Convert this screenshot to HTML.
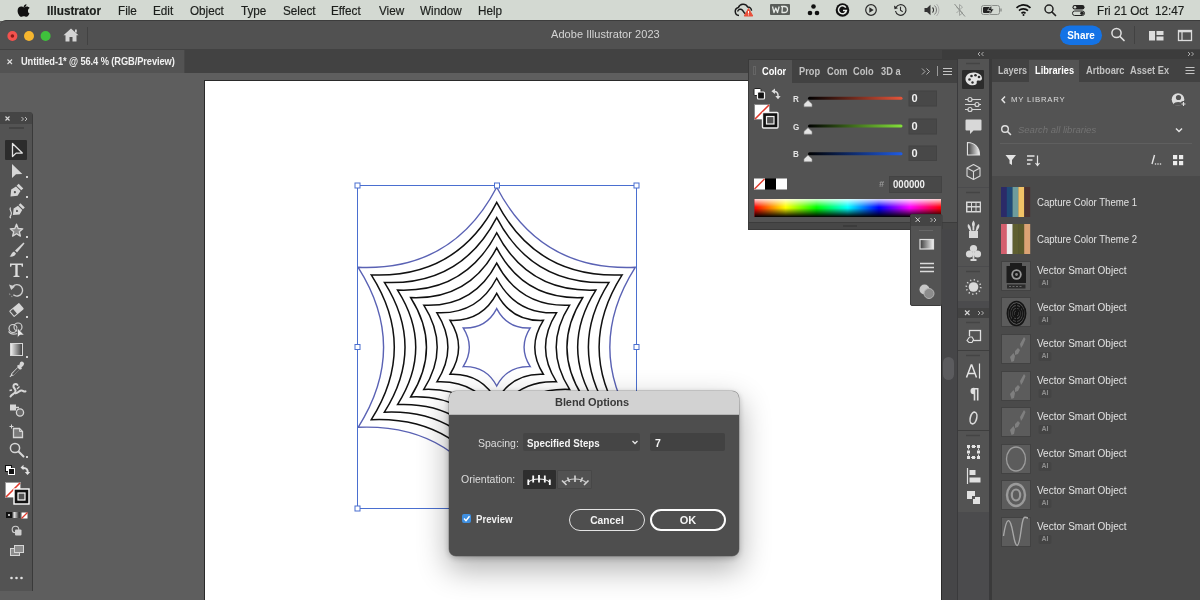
<!DOCTYPE html>
<html><head><meta charset="utf-8">
<style>
*{box-sizing:border-box;margin:0;padding:0}
html,body{width:1200px;height:600px;overflow:hidden;background:#5e5e5e;font-family:"Liberation Sans",sans-serif;}
.a{position:absolute}
#menubar{left:0;top:0;width:1200px;height:21px;background:#d3d9d2}
#menubar span{position:absolute;top:3px;font-size:13px;color:#1c1f1c;white-space:nowrap;transform-origin:0 0;transform:scaleX(.9);will-change:opacity;-webkit-text-stroke:.2px #1c1f1c}
#appbar{left:0;top:20px;width:1200px;height:30px;background:#515151;border-top-left-radius:6px;border-top:1px solid #3c3c3c}
#tabbar{left:0;top:49px;width:1200px;height:25px;background:#424242}
#doctab{left:0;top:50px;width:185px;height:24px;background:#535353;border-right:1px solid #484848}
#canvas{left:0;top:73px;width:957px;height:527px;background:#5e5e5e}
#artboard{left:204px;top:80px;width:738px;height:520px;background:#fff;border:1px solid #2a2a2a;border-bottom:none}
.t{position:absolute;white-space:nowrap;will-change:opacity}
</style></head><body>
<!-- MENUBAR -->
<div id="menubar" class="a">
<span style="left:47px;font-weight:bold">Illustrator</span>
<span style="left:118px">File</span>
<span style="left:153px">Edit</span>
<span style="left:190px">Object</span>
<span style="left:241px">Type</span>
<span style="left:283px">Select</span>
<span style="left:331px">Effect</span>
<span style="left:379px">View</span>
<span style="left:420px">Window</span>
<span style="left:478px">Help</span>
<span style="left:1097px">Fri 21 Oct</span><span style="left:1155px">12:47</span>
</div>
<!-- APPBAR -->
<div id="appbar" class="a"></div>
<div id="tabbar" class="a"></div>
<div id="doctab" class="a"></div>
<div id="canvas" class="a"></div>
<div id="artboard" class="a"></div>
<!--TOP-->
<svg class="a" style="left:0;top:0" width="1200" height="50" viewBox="0 0 1200 50" fill="none">
 <!-- apple -->
 <path d="M26.500 4.200c.1 1.600-1.300 3-2.800 2.900-.2-1.500 1.300-3 2.800-2.900zM29.300 13.700c-.5 1.200-1.600 3.100-2.900 3.100-1 0-1.400-.6-2.600-.6s-1.600.6-2.600.6c-1.500 0-3.600-3.300-3.600-6.100 0-2.700 1.800-4.100 3.500-4.100 1.100 0 2 .7 2.700.7.600 0 1.700-.8 3-.8 1 0 2.100.5 2.900 1.500-2.500 1.400-2.100 4.800.1 5.700z" fill="#111"/>
 <!-- creative cloud -->
 <path d="M739 15.500a4 4 0 0 1-.6-7.900 5 5 0 0 1 9.200-.7 3.900 3.900 0 0 1 3.900 3.900" stroke="#1a1a1a" stroke-width="1.500"/>
 <path d="M737.500 11.500c1-2.500 3.500-3 5-1.200l1.800 2.400c1.300 1.600 3.400 1 4-1" stroke="#1a1a1a" stroke-width="1.400"/>
 <path d="M748.500 8.500l4.300 7.500h-8.600z" fill="#e8503a" stroke="#e8503a" stroke-width="1" stroke-linejoin="round"/>
 <path d="M748.500 11v2.500M748.500 14.500v.8" stroke="#fff" stroke-width="1"/>
 <!-- WD -->
 <rect x="770" y="4" width="20" height="11" rx="1" fill="#5a5e5a"/>
 <path d="M772.500 6.500l1.500 6 1.800-4.500 1.700 4.500 1.700-6M781.500 6.500h3c2 0 3 1.200 3 3s-1.300 3-3.300 3h-2.200l.4-6z" stroke="#e4e8e4" stroke-width="1.300" stroke-linejoin="round"/>
 <!-- three dots -->
 <circle cx="813.500" cy="6.500" r="2.300" fill="#111"/><circle cx="810" cy="13" r="2.300" fill="#111"/><circle cx="817" cy="13" r="2.300" fill="#111"/>
 <!-- G -->
 <circle cx="842.500" cy="10" r="6.800" fill="#111"/>
 <path d="M845.800 7.600a4 4 0 1 0 .6 2.900h-3.400" stroke="#e8ece8" stroke-width="1.500"/>
 <!-- play -->
 <circle cx="871" cy="10" r="5.300" stroke="#2a2a2a" stroke-width="1.200"/><path d="M869.300 7.300l4.400 2.700-4.400 2.700z" fill="#2a2a2a"/>
 <!-- time machine -->
 <path d="M896 7.500a5.300 5.300 0 1 1-.5 3.500" stroke="#2a2a2a" stroke-width="1.200"/>
 <path d="M894 5.500l.5 3.800 3.500-1z" fill="#2a2a2a"/><path d="M900.500 6.800v3.500l2.200 1.500" stroke="#2a2a2a" stroke-width="1.100"/>
 <!-- volume -->
 <path d="M924.500 8h2.500l3.500-3.200v10.400l-3.500-3.200h-2.500z" fill="#333"/>
 <path d="M932.500 7.500a3.500 3.500 0 0 1 0 5" stroke="#333" stroke-width="1.100"/><path d="M934.500 5.500a6 6 0 0 1 0 9" stroke="#777" stroke-width="1"/><path d="M936.500 4a8.500 8.500 0 0 1 0 12" stroke="#aaa" stroke-width=".9"/>
 <!-- bluetooth off -->
 <path d="M956.500 7l6 6-3 2.500v-11l3 2.500-6 6" stroke="#a2a6a2" stroke-width="1"/><path d="M954.500 4l10.500 12.500" stroke="#8a8e8a" stroke-width="1"/>
 <!-- battery -->
 <rect x="981.500" y="5.500" width="18" height="9" rx="2" stroke="#8a8e8a" stroke-width="1"/><path d="M1001 8.500v3" stroke="#8a8e8a" stroke-width="1.400"/>
 <rect x="983" y="7" width="9" height="6" rx="1" fill="#222"/>
 <path d="M992 4.500l-4.500 6h3l-1.500 5 5-6.500h-3z" fill="#111" stroke="#d3d9d2" stroke-width=".7"/>
 <!-- wifi -->
 <path d="M1016.500 7.800a10 10 0 0 1 14 0" stroke="#111" stroke-width="1.700"/><path d="M1019 10.600a6.500 6.500 0 0 1 9 0" stroke="#111" stroke-width="1.700"/><path d="M1021.500 13.300a3 3 0 0 1 4 0" stroke="#111" stroke-width="1.700"/><circle cx="1023.500" cy="15" r="1" fill="#111"/>
 <!-- search -->
 <circle cx="1049" cy="9" r="4" stroke="#222" stroke-width="1.500"/><path d="M1052 12l3.500 3.500" stroke="#222" stroke-width="1.700" stroke-linecap="round"/>
 <!-- control center -->
 <rect x="1072.500" y="5" width="12" height="4.500" rx="2.200" fill="#222"/><circle cx="1075" cy="7.200" r="1.300" fill="#d3d9d2"/>
 <rect x="1072.500" y="11" width="12" height="4.500" rx="2.200" stroke="#222" stroke-width="1"/><circle cx="1082" cy="13.200" r="1.800" fill="#222"/>
 <!-- traffic lights -->
 <circle cx="12.400" cy="36" r="5" fill="#f4524e"/><circle cx="12.400" cy="36" r="1.800" fill="#8c1a16"/>
 <circle cx="29" cy="36" r="5" fill="#f6b62f"/>
 <circle cx="45.600" cy="36" r="5" fill="#3fc13c"/>
 <!-- home -->
 <path d="M71 28.500l7.500 6.800h-2v6.200h-4v-4.500h-3v4.500h-4v-6.200h-2z" fill="#d4d4d4"/><rect x="75" y="29.500" width="1.800" height="3" fill="#d4d4d4"/>
 <path d="M87.500 27v18" stroke="#424242" stroke-width="1"/>
 <!-- share -->
 <rect x="1060" y="25.500" width="42" height="19.500" rx="9.700" fill="#1473e6"/>
 <!-- search -->
 <circle cx="1116.500" cy="33" r="4.600" stroke="#e0e0e0" stroke-width="1.500"/><path d="M1120 36.500l4 4" stroke="#e0e0e0" stroke-width="1.700" stroke-linecap="round"/>
 <path d="M1134.500 26v18" stroke="#424242" stroke-width="1"/>
 <!-- layout -->
 <rect x="1149" y="31" width="6" height="9.500" fill="#dcdcdc"/><rect x="1156.500" y="31" width="7" height="4" fill="#dcdcdc"/><rect x="1156.500" y="36.500" width="7" height="4" fill="#dcdcdc"/>
 <!-- panel -->
 <rect x="1178.500" y="30.500" width="13" height="10" stroke="#dcdcdc" stroke-width="1.300"/><path d="M1182 31v9" stroke="#dcdcdc" stroke-width="1.200"/><path d="M1179 31.500h12" stroke="#dcdcdc" stroke-width="1.600"/>
 <!-- tab close x -->
</svg>
<div class="t" style="left:551px;top:28px;font-size:11px;color:#d4d4d4;letter-spacing:.05px">Adobe Illustrator 2023</div>
<div class="t" style="left:1060px;width:42px;top:29px;text-align:center;font-size:11px;font-weight:bold;color:#fff;transform:scaleX(.9)">Share</div>
<svg class="a" style="left:0;top:50px" width="200" height="24" viewBox="0 50 200 24" fill="none"><path d="M7.500 59.500l4.500 4.500M12 59.500l-4.500 4.500" stroke="#e0e0e0" stroke-width="1.100"/></svg>
<div class="t" style="left:21px;top:55px;font-size:10.500px;font-weight:bold;color:#f0f0f0;transform:scaleX(.885);transform-origin:0 0;letter-spacing:-.1px">Untitled-1* @ 56.4 % (RGB/Preview)</div>

<!--/TOP-->
<!--ART-->
<svg class="a" style="left:0;top:0" width="1200" height="600" viewBox="0 0 1200 600">
<g fill="none" stroke="#111" stroke-width="1.5" stroke-linejoin="miter">
<path d="M496.70 293.44Q511.46 321.74 543.35 320.37Q526.22 347.30 543.35 374.23Q511.46 372.86 496.70 401.16Q481.94 372.86 450.05 374.23Q467.18 347.30 450.05 320.37Q481.94 321.74 496.70 293.44Z"/>
<path d="M496.70 278.27Q515.61 314.54 556.48 312.79Q534.52 347.30 556.48 381.81Q515.61 380.06 496.70 416.33Q477.79 380.06 436.92 381.81Q458.88 347.30 436.92 312.79Q477.79 314.54 496.70 278.27Z"/>
<path d="M496.70 263.11Q519.77 307.35 569.61 305.21Q542.83 347.30 569.61 389.39Q519.77 387.25 496.70 431.49Q473.63 387.25 423.79 389.39Q450.57 347.30 423.79 305.21Q473.63 307.35 496.70 263.11Z"/>
<path d="M496.70 247.95Q523.92 300.15 582.74 297.62Q551.14 347.30 582.74 396.98Q523.92 394.45 496.70 446.65Q469.48 394.45 410.66 396.98Q442.26 347.30 410.66 297.62Q469.48 300.15 496.70 247.95Z"/>
<path d="M496.70 232.79Q528.07 292.96 595.87 290.04Q559.45 347.30 595.87 404.56Q528.07 401.64 496.70 461.81Q465.33 401.64 397.53 404.56Q433.95 347.30 397.53 290.04Q465.33 292.96 496.70 232.79Z"/>
<path d="M496.70 217.62Q532.23 285.76 609.00 282.46Q567.76 347.30 609.00 412.14Q532.23 408.84 496.70 476.98Q461.17 408.84 384.40 412.14Q425.64 347.30 384.40 282.46Q461.17 285.76 496.70 217.62Z"/>
<path d="M496.70 202.46Q536.38 278.57 622.13 274.88Q576.07 347.30 622.13 419.72Q536.38 416.03 496.70 492.14Q457.02 416.03 371.27 419.72Q417.33 347.30 371.27 274.88Q457.02 278.57 496.70 202.46Z"/>
</g>
<g fill="none" stroke="#5a62b4" stroke-width="1.4">
<path d="M496.70 308.60Q507.30 328.93 530.22 327.95Q517.91 347.30 530.22 366.65Q507.30 365.67 496.70 386.00Q486.10 365.67 463.18 366.65Q475.49 347.30 463.18 327.95Q486.10 328.93 496.70 308.60Z"/>
<path d="M496.70 187.30Q540.54 271.37 635.26 267.30Q584.38 347.30 635.26 427.30Q540.54 423.23 496.70 507.30Q452.86 423.23 358.14 427.30Q409.02 347.30 358.14 267.30Q452.86 271.37 496.70 187.30Z"/>
</g>
<rect x="357.5" y="185.5" width="279.0" height="323.0" fill="none" stroke="#4a6fd0" stroke-width="1"/>
<rect x="355.0" y="183.0" width="5" height="5" fill="#fff" stroke="#4a6fd0" stroke-width="1"/>
<rect x="494.5" y="183.0" width="5" height="5" fill="#fff" stroke="#4a6fd0" stroke-width="1"/>
<rect x="634.0" y="183.0" width="5" height="5" fill="#fff" stroke="#4a6fd0" stroke-width="1"/>
<rect x="355.0" y="344.5" width="5" height="5" fill="#fff" stroke="#4a6fd0" stroke-width="1"/>
<rect x="634.0" y="344.5" width="5" height="5" fill="#fff" stroke="#4a6fd0" stroke-width="1"/>
<rect x="355.0" y="506.0" width="5" height="5" fill="#fff" stroke="#4a6fd0" stroke-width="1"/>
<rect x="494.5" y="506.0" width="5" height="5" fill="#fff" stroke="#4a6fd0" stroke-width="1"/>
<rect x="634.0" y="506.0" width="5" height="5" fill="#fff" stroke="#4a6fd0" stroke-width="1"/>
</svg>
<!--/ART-->
<!--TOOLS-->
<div class="a" style="left:0;top:112px;width:33px;height:479px;background:#535353;border-right:1px solid #3a3a3a;border-top-right-radius:4px;overflow:hidden">
 <div class="a" style="left:0;top:0;width:33px;height:12px;background:#454545"></div>
 <div class="a" style="left:9px;top:15px;width:15px;height:2px;background:#444"></div>
 <div class="a" style="left:5px;top:28px;width:22px;height:20px;background:#2c2c2c;border-radius:1px"></div>
</div>
<svg class="a" style="left:0;top:100px" width="40" height="500" viewBox="0 100 40 500" fill="none" stroke="none">
 <!-- header x and >> -->
 <path d="M5.5 116.5l4 4M9.5 116.5l-4 4" stroke="#d8d8d8" stroke-width="1.1"/>
 <path d="M21.5 117l2 2-2 2M25 117l2 2-2 2" stroke="#c8c8c8" stroke-width="0.9"/>
 <!-- small corner dots -->
 <g fill="#d0d0d0">
  <rect x="26" y="176" width="2" height="2"/><rect x="26" y="196" width="2" height="2"/><rect x="26" y="236" width="2" height="2"/>
  <rect x="26" y="256" width="2" height="2"/><rect x="26" y="276" width="2" height="2"/><rect x="26" y="296" width="2" height="2"/>
  <rect x="26" y="316" width="2" height="2"/><rect x="26" y="356" width="2" height="2"/><rect x="26" y="456" width="2" height="2"/>
 </g>
 <!-- selection tool (outlined arrow) -->
 <path d="M12.5 143.5v13l3.6-3.4 1 .1 5.2-.2z" stroke="#e4e4e4" stroke-width="1.3" stroke-linejoin="round" transform="translate(0,0)"/>
 <!-- direct selection (solid) -->
 <path d="M12 164v14l4-3.8 6.300-.2z" fill="#d6d6d6"/>
 <!-- pen -->
 <g transform="translate(16.500,190.500) rotate(45)" fill="#d6d6d6">
  <path d="M-3.200-2.500h6.400l1.300 5.500-4.500 5.500-4.500-5.500zM0 1.200a1.100 1.100 0 1 0 .01 0z" fill-rule="evenodd"/>
  <rect x="-3.300" y="-6.300" width="6.600" height="2.800"/>
 </g>
 <!-- curvature pen -->
 <g transform="translate(18.500,209.500) rotate(45)" fill="#d6d6d6">
  <path d="M-3-2.300h6l1.200 5-4.200 5.200-4.200-5.200zM0 1.100a1 1 0 1 0 .01 0z" fill-rule="evenodd"/>
  <rect x="-3.100" y="-5.800" width="6.200" height="2.500"/>
 </g>
 <path d="M10.500 207.500c-2 3 2.500 4 .5 7.500-.8 1.600-1.800 2.500 0 2.800" stroke="#d6d6d6" stroke-width="1.200"/>
 <!-- star -->
 <path d="M16.5 224.2L18.2 228.5L22.8 228.8L19.3 231.7L20.4 236.1L16.5 233.7L12.6 236.1L13.7 231.7L10.2 228.8L14.8 228.5z" stroke="#d6d6d6" stroke-width="1.300" stroke-linejoin="round" fill="#8a8a8a"/>
 <!-- brush -->
 <path d="M23.500 242.500l1 1-7.500 9-2-2z" fill="#d6d6d6"/>
 <path d="M14 251.500l2 2c-1 2.500-3.500 3.500-6.500 3 1.800-.8 1.500-3.500 4.500-5z" fill="#d6d6d6"/>
 <!-- T -->
 <path d="M10 263.500h13v3.300h-1.200l-.5-1.800h-3.600v10.500l1.800.4v1.100h-6v-1.100l1.800-.4v-10.500h-3.600l-.5 1.800h-1.200z" fill="#dcdcdc"/>
 <!-- rotate -->
 <path d="M11.500 288.500a5.700 5.700 0 1 1 1.800 6.300" stroke="#cfcfcf" stroke-width="1.400"/>
 <path d="M9 284.500l2.200 5.500 3.800-3.400z" fill="#cfcfcf"/>
 <path d="M12.500 296.800a6 6 0 0 1-3.300-4" stroke="#8c8c8c" stroke-width="1.200" stroke-dasharray="1.500 1.500"/>
 <!-- eraser -->
 <g transform="translate(16.500,310) rotate(-40)">
  <rect x="-6.500" y="-4" width="13" height="8" rx="1" fill="#d6d6d6"/>
  <rect x="-5.500" y="-3" width="3.500" height="6" fill="#535353"/>
 </g>
 <!-- shape builder -->
 <circle cx="13" cy="328.500" r="4" stroke="#d0d0d0" stroke-width="1.200"/>
 <circle cx="18" cy="327" r="4" stroke="#d0d0d0" stroke-width="1.200"/>
 <path d="M8.500 331.500c2 3 6 3 9 2" stroke="#d0d0d0" stroke-width="1.200"/>
 <path d="M17.500 328v9.500l2.500-2.400 4.200-.1z" fill="#e8e8e8" stroke="#535353" stroke-width=".6"/>
 <!-- gradient -->
 <defs><linearGradient id="gt" x1="0" x2="1"><stop offset="0" stop-color="#f2f2f2"/><stop offset="1" stop-color="#3a3a3a"/></linearGradient></defs>
 <rect x="10.500" y="343.500" width="12" height="12" fill="url(#gt)" stroke="#d6d6d6" stroke-width="1"/>
 <!-- eyedropper -->
 <path d="M20.200 362.300a2.200 2.200 0 0 1 3.200 3.200l-2.200 2.200.8.800-1.300 1.300-.8-.8-6.400 6.400-2.300.8-.9 1.100-.8-.8 1.100-.9.800-2.300 6.400-6.400-.8-.8 1.300-1.300.8.800z" fill="#d6d6d6"/>
 <path d="M17.800 367.800l1.600 1.600-5.300 5.300-1.900.5.500-1.900z" fill="#535353"/>
 <!-- symbol sprayer-ish -->
 <path d="M10.500 396.500c1.500-2.500 4-2.500 5-5s-3-3.500-2-6c.8-1.800 3-1.800 4-.5" stroke="#d6d6d6" stroke-width="2" stroke-linecap="round"/>
 <path d="M15 393c2 1.500 3.500-2 6-2.500s2.500 2 4.500.8" stroke="#d6d6d6" stroke-width="2" stroke-linecap="round"/>
 <path d="M9.500 390.500l2.500-.5M17 389l2.500-2.500" stroke="#d6d6d6" stroke-width="1.300"/>
 <!-- blend / live paint-ish -->
 <rect x="10" y="404.500" width="6" height="6" fill="#d6d6d6"/>
 <path d="M13 407.500h6" stroke="#d6d6d6" stroke-width="1.500"/>
 <circle cx="20" cy="412.500" r="3.600" stroke="#d6d6d6" stroke-width="1.300" fill="#6a6a6a"/>
 <!-- artboard -->
 <path d="M9.500 426.500h4M11.500 424.500v4" stroke="#d6d6d6" stroke-width="1"/>
 <path d="M13.500 428.500h6l3 3v6h-9z" stroke="#d6d6d6" stroke-width="1.300" fill="#7a7a7a"/>
 <path d="M19.500 428.500v3h3" stroke="#d6d6d6" stroke-width="1"/>
 <!-- zoom -->
 <circle cx="15" cy="448" r="4.600" stroke="#d6d6d6" stroke-width="1.500"/>
 <path d="M18.500 451.500l5 5" stroke="#d6d6d6" stroke-width="2" stroke-linecap="round"/>
 <!-- default fill/stroke + swap -->
 <rect x="5.500" y="465.500" width="6" height="6" fill="#fff" stroke="#111" stroke-width="1"/>
 <rect x="8.500" y="468.500" width="6" height="6" fill="#111" stroke="#fff" stroke-width="1"/>
 <path d="M23 468c3.500-.3 5 1.700 4.700 5" stroke="#e0e0e0" stroke-width="2"/>
 <path d="M23.500 464.800v5.400l-3-2.700zM24.800 472h5.400l-2.700 3z" fill="#e0e0e0"/>
 <!-- fill (none) -->
 <rect x="5.500" y="482.500" width="15" height="15" fill="#fff" stroke="#9a9a9a" stroke-width="1"/>
 <path d="M6 497l14-14" stroke="#e0392b" stroke-width="1.600"/>
 <!-- stroke (black) -->
 <rect x="14" y="489" width="15" height="15" fill="#111" stroke="#fff" stroke-width="1.400"/>
 <rect x="18" y="493" width="7" height="7" fill="#535353" stroke="#fff" stroke-width="1.200"/>
 <!-- color modes -->
 <rect x="6" y="512" width="6" height="6" fill="#111"/><rect x="8" y="514" width="2" height="2" fill="#bbb"/>
 <defs><linearGradient id="gm" x1="0" x2="1"><stop offset="0" stop-color="#fff"/><stop offset="1" stop-color="#222"/></linearGradient></defs>
 <rect x="13.500" y="512" width="6" height="6" fill="url(#gm)"/>
 <rect x="21.500" y="512.500" width="6" height="6" fill="#fff"/><path d="M21.500 518.500l6-6" stroke="#e0392b" stroke-width="1.300"/>
 <!-- draw mode -->
 <circle cx="15.500" cy="529.500" r="3.300" stroke="#cfcfcf" stroke-width="1.100"/>
 <rect x="15" y="529.500" width="6.500" height="6" rx="1" fill="#cfcfcf"/>
 <!-- screen mode -->
 <rect x="10.500" y="548.500" width="9" height="7" fill="#8c8c8c" stroke="#d6d6d6" stroke-width="1"/>
 <rect x="14.500" y="545.500" width="9" height="7" fill="#8c8c8c" stroke="#d6d6d6" stroke-width="1"/>
 <!-- dots -->
 <circle cx="11.500" cy="578" r="1.300" fill="#e0e0e0"/><circle cx="16.500" cy="578" r="1.300" fill="#e0e0e0"/><circle cx="21.500" cy="578" r="1.300" fill="#e0e0e0"/>
</svg>

<!--/TOOLS-->
<!--COLORPANEL-->
<div class="a" style="left:749px;top:60px;width:208px;height:169px;background:#535353;box-shadow:0 0 0 1px #3a3a3a"></div>
<div class="a" style="left:749px;top:60px;width:208px;height:23px;background:#424242"></div>
<div class="a" style="left:749px;top:60px;width:43px;height:24px;background:#535353"></div>
<div class="a" style="left:749px;top:222px;width:208px;height:7px;background:#474747;border-top:1px solid #3c3c3c"></div>
<div class="a" style="left:843px;top:225px;width:14px;height:2px;background:#3c3c3c"></div>
<div class="a" style="left:753px;top:66px;width:3px;height:9px;border:1px solid #6a6a6a;opacity:.8"></div>
<div class="t" style="left:762px;top:65px;font-size:11px;font-weight:bold;color:#fff;letter-spacing:0;transform:scaleX(.84);transform-origin:0 0">Color</div>
<div class="t" style="left:799px;top:65px;font-size:11px;font-weight:bold;color:#c2c2c2;letter-spacing:0;transform:scaleX(.84);transform-origin:0 0">Prop</div>
<div class="t" style="left:827px;top:65px;font-size:11px;font-weight:bold;color:#c2c2c2;letter-spacing:0;transform:scaleX(.84);transform-origin:0 0">Com</div>
<div class="t" style="left:853px;top:65px;font-size:11px;font-weight:bold;color:#c2c2c2;letter-spacing:0;transform:scaleX(.84);transform-origin:0 0">Colo</div>
<div class="t" style="left:881px;top:65px;font-size:11px;font-weight:bold;color:#c2c2c2;letter-spacing:0;transform:scaleX(.84);transform-origin:0 0">3D a</div>
<svg class="a" style="left:740px;top:50px" width="220" height="270" viewBox="740 50 220 270" fill="none">
 <path d="M922 68.500l3 3-3 3M926.500 68.500l3 3-3 3" stroke="#b0b0b0" stroke-width="1"/>
 <path d="M937.500 66v10" stroke="#9a9a9a" stroke-width="1"/>
 <path d="M943 68.500h9M943 71.500h9M943 74.500h9" stroke="#c4c4c4" stroke-width="1.200"/>
 <!-- default fill/stroke -->
 <rect x="754" y="88.500" width="7" height="7" rx="1" fill="#fff" stroke="#222" stroke-width="1"/>
 <rect x="757.500" y="92" width="7" height="7" rx="1" fill="#111" stroke="#f4f4f4" stroke-width="1.200"/>
 <!-- swap -->
 <path d="M773.500 91.500c3-.5 5 1.500 4.500 5" stroke="#dcdcdc" stroke-width="1.500"/>
 <path d="M775 88.500v5.500l-3.600-2.700zM775.300 96h5.400l-2.700 3.200z" fill="#dcdcdc"/>
 <!-- fill none -->
 <rect x="754.500" y="104.500" width="15" height="15" fill="#fff" stroke="#8a8a8a" stroke-width="1"/>
 <path d="M755 119l14-14" stroke="#e0392b" stroke-width="1.600"/>
 <!-- stroke black -->
 <rect x="762.500" y="112.500" width="15.500" height="15.500" rx="1" fill="#111" stroke="#f0f0f0" stroke-width="1.400"/>
 <rect x="766.500" y="116.500" width="7.500" height="7.500" fill="#535353" stroke="#f0f0f0" stroke-width="1.200"/>
 <!-- sliders -->
 <defs>
  <linearGradient id="sr" x1="0" x2="1"><stop offset="0" stop-color="#000"/><stop offset="1" stop-color="#e6553a"/></linearGradient>
  <linearGradient id="sg" x1="0" x2="1"><stop offset="0" stop-color="#000"/><stop offset="1" stop-color="#84e23a"/></linearGradient>
  <linearGradient id="sb" x1="0" x2="1"><stop offset="0" stop-color="#000"/><stop offset="1" stop-color="#1f5ce6"/></linearGradient>
  <linearGradient id="hue" x1="0" x2="1"><stop offset="0" stop-color="#f00"/><stop offset=".167" stop-color="#ff0"/><stop offset=".333" stop-color="#0f0"/><stop offset=".5" stop-color="#0ff"/><stop offset=".667" stop-color="#00f"/><stop offset=".833" stop-color="#f0f"/><stop offset="1" stop-color="#f00"/></linearGradient>
  <linearGradient id="val" x1="0" x2="0" y1="0" y2="1"><stop offset="0" stop-color="#fff" stop-opacity=".85"/><stop offset=".45" stop-color="#fff" stop-opacity="0"/><stop offset=".5" stop-color="#000" stop-opacity="0"/><stop offset="1" stop-color="#000" stop-opacity="1"/></linearGradient>
 </defs>
 <rect x="808" y="96.800" width="94.500" height="3" rx="1.500" fill="url(#sr)"/>
 <rect x="808" y="124.500" width="94.500" height="3" rx="1.500" fill="url(#sg)"/>
 <rect x="808" y="152.200" width="94.500" height="3" rx="1.500" fill="url(#sb)"/>
 <g fill="#e4e4e4" stroke="#8a8a8a" stroke-width=".6"><path d="M808 100.300l4 3.700v2.800h-8v-2.800z"/><path d="M808 127.700l4 3.700v2.800h-8v-2.800z"/><path d="M808 155.200l4 3.700v2.800h-8v-2.800z"/></g>
 <!-- value boxes -->
 <g fill="#484848" stroke="#434343" stroke-width="1">
  <rect x="909" y="91" width="27.500" height="15"/><rect x="909" y="119" width="27.500" height="15"/><rect x="909" y="146" width="27.500" height="14.500"/>
  <rect x="889.500" y="176.500" width="52" height="16"/>
 </g>
 <!-- swatches -->
 <rect x="754" y="178.500" width="11" height="11" fill="#fff"/><path d="M754.500 189l10-10" stroke="#e0392b" stroke-width="1.400"/>
 <rect x="765" y="178.500" width="11" height="11" fill="#000"/>
 <rect x="776" y="178.500" width="11" height="11" fill="#fff"/>
 <!-- spectrum -->
 <rect x="754.500" y="199" width="186.500" height="18" fill="url(#hue)"/>
 <rect x="754.500" y="199" width="186.500" height="18" fill="url(#val)"/>
 <!-- floating mini panel -->
 <rect x="910.500" y="214.500" width="31.500" height="91" rx="1.500" fill="#535353" stroke="#3c3c3c" stroke-width="1"/>
 <path d="M911 215h30.500v11h-30.500z" fill="#444"/>
 <path d="M915.500 217.500l4.500 4.500M920 217.500l-4.500 4.500" stroke="#d0d0d0" stroke-width="1"/>
 <path d="M930.500 218l2 2-2 2M934 218l2 2-2 2" stroke="#c0c0c0" stroke-width=".9"/>
 <path d="M919 230.500h14" stroke="#666" stroke-width="1"/>
 <defs><linearGradient id="gp" x1="0" x2="1"><stop offset="0" stop-color="#3a3a3a"/><stop offset="1" stop-color="#f4f4f4"/></linearGradient></defs>
 <rect x="920" y="239.500" width="13.500" height="9.500" fill="url(#gp)" stroke="#e0e0e0" stroke-width="1.200"/>
 <path d="M920 263.500h14M920 267.500h14M920 271.500h14" stroke="#dcdcdc" stroke-width="1.600"/>
 <circle cx="924.500" cy="289.500" r="5" fill="#c8c8c8"/><circle cx="929" cy="293.500" r="5" fill="#8c8c8c" stroke="#b4b4b4" stroke-width="1"/>
</svg>
<div class="t" style="left:793px;top:93px;font-size:9.500px;font-weight:bold;color:#e4e4e4;transform:scaleX(.85);transform-origin:0 0">R</div>
<div class="t" style="left:793px;top:121px;font-size:9.500px;font-weight:bold;color:#e4e4e4;transform:scaleX(.85);transform-origin:0 0">G</div>
<div class="t" style="left:793px;top:148px;font-size:9.500px;font-weight:bold;color:#e4e4e4;transform:scaleX(.85);transform-origin:0 0">B</div>
<div class="t" style="left:911.500px;top:91.500px;font-size:11px;font-weight:bold;color:#f0f0f0">0</div>
<div class="t" style="left:911.500px;top:119.500px;font-size:11px;font-weight:bold;color:#f0f0f0">0</div>
<div class="t" style="left:911.500px;top:147px;font-size:11px;font-weight:bold;color:#f0f0f0">0</div>
<div class="t" style="left:879px;top:179px;font-size:9px;font-weight:bold;font-style:italic;color:#9a9a9a">#</div>
<div class="t" style="left:893px;top:178px;font-size:11px;font-weight:bold;color:#f0f0f0;transform:scaleX(.87);transform-origin:0 0">000000</div>

<!--/COLORPANEL-->
<!--DOCK-->
<!-- strip under appbar on right -->
<div class="a" style="left:942px;top:50px;width:258px;height:10px;background:#3c3c3c"></div>
<!-- scrollbar track -->
<div class="a" style="left:942px;top:229px;width:15px;height:371px;background:#464648"></div>
<div class="a" style="left:943px;top:357px;width:11px;height:23px;background:#5b5b5e;border-radius:5.500px"></div>
<!-- dock column -->
<div class="a" style="left:957px;top:59px;width:33px;height:541px;background:#4b4b4d;border-left:1px solid #3a3a3c;border-right:1px solid #3a3a3c"></div>
<div class="a" style="left:990px;top:59px;width:2px;height:541px;background:#3a3a3a"></div>
<div class="a" style="left:958px;top:59px;width:31px;height:128px;background:#535353"></div>
<div class="a" style="left:958px;top:188px;width:31px;height:78px;background:#535353"></div>
<div class="a" style="left:958px;top:267px;width:31px;height:34px;background:#535353"></div>
<div class="a" style="left:958px;top:308px;width:31px;height:204px;background:#535353"></div>
<div class="a" style="left:958px;top:308px;width:31px;height:10px;background:#424242"></div>
<div class="a" style="left:958px;top:350px;width:31px;height:1px;background:#3e3e3e"></div>
<div class="a" style="left:958px;top:430px;width:31px;height:1px;background:#3e3e3e"></div>
<div class="a" style="left:962px;top:70px;width:22px;height:19px;background:#2c2c2c;border-radius:1px"></div>
<svg class="a" style="left:940px;top:45px" width="60" height="480" viewBox="940 45 60 480" fill="none">
 <path d="M980 52l-2 2 2 2M983.500 52l-2 2 2 2" stroke="#b8b8b8" stroke-width=".9"/>
 <g stroke="#444" stroke-width="1.500"><path d="M966 63.500h14M966 192.500h14M966 271.500h14M966 322.500h14M966 355.500h14M966 435.500h14"/></g>
 <!-- palette -->
 <path d="M973.500 72.500c5 0 8.500 2.600 8.500 5.800 0 2-1.500 2.600-3 2.300-1.600-.3-2.500.3-2.300 1.500.3 1.500-.5 3.200-3.600 3.200-4.500 0-7.600-2.800-7.600-6.400s3.500-6.400 8-6.400z" fill="#e4e4e4"/>
 <g fill="#2c2c2c"><circle cx="969.500" cy="79.500" r="1.300"/><circle cx="971.500" cy="76" r="1.300"/><circle cx="975.500" cy="75.200" r="1.300"/><circle cx="979" cy="77" r="1.300"/><circle cx="972.500" cy="82.500" r="1.200"/></g>
 <!-- sliders -->
 <g stroke="#d4d4d4" stroke-width="1.200"><path d="M965 99.500h16M965 104.500h16M965 109.500h16"/></g>
 <g fill="#535353" stroke="#d4d4d4" stroke-width="1.200"><circle cx="970" cy="99.500" r="2"/><circle cx="977" cy="104.500" r="2"/><circle cx="970" cy="109.500" r="2"/></g>
 <!-- bubble -->
 <path d="M966.500 119.500h14a1 1 0 0 1 1 1v9a1 1 0 0 1-1 1h-7l-3.500 3.500v-3.500h-3.500a1 1 0 0 1-1-1v-9a1 1 0 0 1 1-1z" fill="#d8d8d8"/>
 <!-- gradient quarter -->
 <defs><linearGradient id="gq" x1="0" x2="1"><stop offset="0" stop-color="#3a3a3a"/><stop offset="1" stop-color="#f4f4f4"/></linearGradient></defs>
 <path d="M967.500 142.500c7 0 12 5 12 12.500h-12z" fill="url(#gq)" stroke="#e0e0e0" stroke-width="1.200"/>
 <!-- cube -->
 <path d="M973.500 164.500l6.500 3.500v8l-6.500 3.500-6.500-3.500v-8zM967 168l6.500 3.500 6.500-3.500M973.500 171.500v8" stroke="#d8d8d8" stroke-width="1.100" stroke-linejoin="round"/>
 <!-- swatches grid -->
 <rect x="966" y="201.500" width="15" height="11" fill="#d8d8d8"/>
 <g fill="#535353"><rect x="967.500" y="203" width="3.500" height="3"/><rect x="972" y="203" width="3.500" height="3"/><rect x="976.500" y="203" width="3.200" height="3"/><rect x="967.500" y="207.500" width="3.500" height="3.500"/><rect x="972" y="207.500" width="3.500" height="3.500"/><rect x="976.500" y="207.500" width="3.200" height="3.500"/></g>
 <!-- brushes pot -->
 <path d="M969 231h9v7h-9z" fill="#d8d8d8"/>
 <path d="M973.500 220.500c1.500 2 1.800 4 .8 6v4h-1.800v-4c-1-2-.6-4 1-6zM968 224c1.800 1 2.600 2.500 2.800 4.500l.8 2.500h-1.600l-1.500-2.500c-1-1.500-1-3-.5-4.500zM979 224c-1.800 1-2.600 2.500-2.800 4.500l-.8 2.500h1.600l1.500-2.500c1-1.500 1-3 .5-4.500z" fill="#d8d8d8"/>
 <!-- club -->
 <circle cx="973.500" cy="248.500" r="3.600" fill="#d8d8d8"/><circle cx="969.500" cy="254" r="3.600" fill="#d8d8d8"/><circle cx="977.500" cy="254" r="3.600" fill="#d8d8d8"/>
 <path d="M973.500 252v7.500M970.500 260h6" stroke="#d8d8d8" stroke-width="1.800"/>
 <!-- sun -->
 <circle cx="973.500" cy="287" r="4.800" fill="#d8d8d8"/>
 <circle cx="973.500" cy="287" r="7.200" stroke="#d0d0d0" stroke-width="1.600" stroke-dasharray="1.300 2.470"/>
 <!-- floating header -->
 <path d="M965 310.500l4.500 4.500M969.500 310.500l-4.500 4.500" stroke="#d8d8d8" stroke-width="1.100"/>
 <path d="M978 311l2 2-2 2M981.500 311l2 2-2 2" stroke="#c0c0c0" stroke-width=".9"/>
 <!-- artboards icon -->
 <rect x="969.500" y="330.500" width="11" height="10" stroke="#e0e0e0" stroke-width="1.300"/>
 <rect x="966" y="336" width="7" height="7" fill="#535353"/>
 <path d="M967 340.500l2.500-3.500h2.500l1.500 2.500-1.500 3h-3z" stroke="#e0e0e0" stroke-width="1.100"/>
 <!-- A| -->
 <path d="M966.500 377.500l4.700-12.500h.6l4.700 12.500M968.300 373.500h6" stroke="#e4e4e4" stroke-width="1.500"/>
 <path d="M979.500 363.500v15" stroke="#e4e4e4" stroke-width="1.200"/>
 <!-- pilcrow -->
 <path d="M975 388h3.500v12.500h-1.600v-11h-1.600v11h-1.600v-6.300a3.200 3.200 0 0 1 0-6.400z" fill="#e0e0e0"/>
 <!-- O italic -->
 <ellipse cx="973.500" cy="418" rx="3.200" ry="6" transform="rotate(14 973.500 418)" stroke="#dcdcdc" stroke-width="1.600"/>
 <!-- transform -->
 <rect x="968.500" y="446.500" width="10" height="11" stroke="#e0e0e0" stroke-width="1" stroke-dasharray="1.500 1.500"/>
 <g fill="#e4e4e4"><rect x="967" y="445" width="3" height="3"/><rect x="977" y="445" width="3" height="3"/><rect x="967" y="456" width="3" height="3"/><rect x="977" y="456" width="3" height="3"/><rect x="972" y="445" width="3" height="3"/><rect x="972" y="456" width="3" height="3"/><rect x="967" y="450.500" width="3" height="3"/><rect x="977" y="450.500" width="3" height="3"/></g>
 <!-- align -->
 <path d="M967.500 468v16" stroke="#e0e0e0" stroke-width="1.200"/>
 <rect x="969.500" y="470" width="6" height="5" fill="#e0e0e0"/><rect x="969.500" y="477.500" width="11" height="5" fill="#e0e0e0"/>
 <!-- pathfinder -->
 <rect x="967" y="491" width="8" height="8" fill="#e0e0e0"/>
 <rect x="972.500" y="496.500" width="8" height="8" fill="#e0e0e0" stroke="#535353" stroke-width="1"/>
 <rect x="972.500" y="496.500" width="2.500" height="2.500" fill="#535353"/>
</svg>

<!--/DOCK-->
<!--LIBS-->
<div class="a" style="left:992px;top:59px;width:208px;height:541px;background:#535353"></div>
<div class="a" style="left:992px;top:59px;width:208px;height:23px;background:#424242"></div>
<div class="a" style="left:1029px;top:60px;width:50px;height:23px;background:#535353"></div>
<div class="a" style="left:992px;top:176px;width:208px;height:424px;background:#4a4a4a"></div>
<div class="a" style="left:1000px;top:143px;width:192px;height:1px;background:#5f5f5f"></div>
<div class="t" style="left:998px;top:64px;font-size:11px;font-weight:bold;color:#c2c2c2;transform:scaleX(.82);transform-origin:0 0">Layers</div>
<div class="t" style="left:1035px;top:64px;font-size:11px;font-weight:bold;color:#fff;transform:scaleX(.84);transform-origin:0 0">Libraries</div>
<div class="t" style="left:1086px;top:64px;font-size:11px;font-weight:bold;color:#c2c2c2;transform:scaleX(.84);transform-origin:0 0">Artboarc</div>
<div class="t" style="left:1130px;top:64px;font-size:11px;font-weight:bold;color:#c2c2c2;transform:scaleX(.84);transform-origin:0 0">Asset Ex</div>
<div class="t" style="left:1011px;top:95px;font-size:7.800px;color:#dcdcdc;letter-spacing:.75px">MY LIBRARY</div>
<div class="t" style="left:1018px;top:124px;font-size:9.500px;font-style:italic;color:#737373">Search all libraries</div>
<svg class="a" style="left:990px;top:45px" width="210" height="555" viewBox="990 45 210 555" fill="none">
<path d="M1188 52l2 2-2 2M1191.500 52l2 2-2 2" stroke="#b8b8b8" stroke-width=".9"/>
<path d="M1185.500 67.500h9M1185.500 70.500h9M1185.500 73.500h9" stroke="#c4c4c4" stroke-width="1.200"/>
<path d="M1005 96.500l-3 3.200 3 3.200" stroke="#e4e4e4" stroke-width="1.500"/>
<circle cx="1178" cy="99.500" r="6.300" fill="#dcdcdc"/><circle cx="1178.500" cy="97.500" r="2.600" fill="#535353"/><path d="M1173.500 104.200c1-3 8.500-3 9.500 0l-1.500 1.500h-6.500z" fill="#535353"/>
<circle cx="1183.500" cy="104" r="3" fill="#535353"/><path d="M1181.500 104h4M1183.500 102v4" stroke="#dcdcdc" stroke-width="1.100"/>
<circle cx="1005" cy="129" r="3.300" stroke="#e0e0e0" stroke-width="1.400"/><path d="M1007.500 131.500l3 3" stroke="#e0e0e0" stroke-width="1.600" stroke-linecap="round"/>
<path d="M1176 128.500l3 3 3-3" stroke="#e4e4e4" stroke-width="1.500"/>
<path d="M1005.500 155h10.500l-4 5v5l-2.500-1.500v-3.500z" fill="#e4e4e4"/>
<path d="M1027 156h7.500M1027 160h5.500M1027 164h3.500" stroke="#e4e4e4" stroke-width="1.600"/><path d="M1037.500 155.500v9.500M1035.500 163l2 2.500 2-2.500" stroke="#e4e4e4" stroke-width="1.200"/>
<path d="M1154.500 155l-2.500 9" stroke="#e4e4e4" stroke-width="1.400"/><circle cx="1155.500" cy="164" r=".8" fill="#e4e4e4"/><circle cx="1158" cy="164" r=".8" fill="#e4e4e4"/><circle cx="1160.500" cy="164" r=".8" fill="#e4e4e4"/>
<g fill="#ececec"><rect x="1173" y="155" width="4.200" height="4.200"/><rect x="1179" y="155" width="4.200" height="4.200"/><rect x="1173" y="161" width="4.200" height="4.200"/><rect x="1179" y="161" width="4.200" height="4.200"/></g>
<rect x="1001.0" y="187" width="6" height="30" fill="#2b2a68"/>
<rect x="1006.8" y="187" width="6" height="30" fill="#1f4b78"/>
<rect x="1012.6" y="187" width="6" height="30" fill="#6d9c9c"/>
<rect x="1018.4" y="187" width="6" height="30" fill="#f2c266"/>
<rect x="1024.2" y="187" width="6" height="30" fill="#4b3232"/>
<rect x="1001.0" y="224" width="6" height="30" fill="#d4606e"/>
<rect x="1006.8" y="224" width="6" height="30" fill="#ececec"/>
<rect x="1012.6" y="224" width="6" height="30" fill="#5e5e30"/>
<rect x="1018.4" y="224" width="6" height="30" fill="#5a5a2c"/>
<rect x="1024.2" y="224" width="6" height="30" fill="#dba374"/>
<rect x="1001.500" y="261.5" width="29" height="29" fill="#5c5c5c" stroke="#424242" stroke-width="1"/>
<rect x="1001.500" y="297.5" width="29" height="29" fill="#5c5c5c" stroke="#424242" stroke-width="1"/>
<rect x="1001.500" y="334.5" width="29" height="29" fill="#5c5c5c" stroke="#424242" stroke-width="1"/>
<rect x="1001.500" y="371.5" width="29" height="29" fill="#5c5c5c" stroke="#424242" stroke-width="1"/>
<rect x="1001.500" y="407.5" width="29" height="29" fill="#5c5c5c" stroke="#424242" stroke-width="1"/>
<rect x="1001.500" y="444.5" width="29" height="29" fill="#5c5c5c" stroke="#424242" stroke-width="1"/>
<rect x="1001.500" y="480.5" width="29" height="29" fill="#5c5c5c" stroke="#424242" stroke-width="1"/>
<rect x="1001.500" y="517.5" width="29" height="29" fill="#5c5c5c" stroke="#424242" stroke-width="1"/>
<rect x="1006.500" y="266" width="19.500" height="17" fill="#1c1c1c"/><rect x="1010" y="263" width="12" height="3.500" fill="#1c1c1c"/><circle cx="1016.500" cy="274.500" r="5.200" fill="#9a9a9a"/><circle cx="1016.500" cy="274.500" r="3.400" fill="#1c1c1c"/><circle cx="1016.500" cy="274.500" r="1.400" fill="#8a8a8a"/><rect x="1007" y="284.500" width="18.500" height="4" fill="#2c2c2c"/><path d="M1009 286.500h14" stroke="#6a6a6a" stroke-width="1" stroke-dasharray="2 1.500"/>
<ellipse cx="1016.500" cy="313.500" rx="9.1" ry="12.0" stroke="#141414" stroke-width="1.700"/>
<ellipse cx="1016.500" cy="313.500" rx="7.1" ry="9.3" stroke="#141414" stroke-width="1.700"/>
<ellipse cx="1016.500" cy="313.500" rx="5.0" ry="6.6" stroke="#141414" stroke-width="1.700"/>
<ellipse cx="1016.500" cy="313.500" rx="3.0" ry="3.9" stroke="#141414" stroke-width="1.700"/>
<ellipse cx="1016.500" cy="313.500" rx="1.0" ry="1.3" stroke="#141414" stroke-width="1.700"/>
<path d="M1016.500 303v21M1012 320l9-13" stroke="#141414" stroke-width="1.400"/>
<path d="M1020 344 l4 -7 1.500 2 -2.500 6 -2 3zM1015 351 l3 -3 2 2 -2 4 -3 1zM1010 357 l3.500 -4 1.500 3 -1 5 -2.500 1z" fill="#858585" opacity=".85"/>
<path d="M1020 381 l4 -7 1.500 2 -2.500 6 -2 3zM1015 388 l3 -3 2 2 -2 4 -3 1zM1010 394 l3.500 -4 1.500 3 -1 5 -2.500 1z" fill="#858585" opacity=".85"/>
<path d="M1020 417 l4 -7 1.500 2 -2.500 6 -2 3zM1015 424 l3 -3 2 2 -2 4 -3 1zM1010 430 l3.500 -4 1.500 3 -1 5 -2.500 1z" fill="#858585" opacity=".85"/>
<ellipse cx="1016" cy="459" rx="9.500" ry="12" stroke="#9c9c9c" stroke-width="1.300"/>
<ellipse cx="1016" cy="495" rx="9" ry="11" stroke="#9a9a9a" stroke-width="2.400"/><ellipse cx="1016" cy="495" rx="4.200" ry="5.500" stroke="#9a9a9a" stroke-width="2.200"/>
<path d="M1003.500 536c3-20 6.500-20 9.500-3s5.500 17 8-2 4-13 7-13" stroke="#a8a8a8" stroke-width="1.400"/>
<rect x="1038.500" y="279" width="13" height="9" rx="2" fill="#444"/>
<rect x="1038.500" y="316" width="13" height="9" rx="2" fill="#444"/>
<rect x="1038.500" y="352" width="13" height="9" rx="2" fill="#444"/>
<rect x="1038.500" y="389" width="13" height="9" rx="2" fill="#444"/>
<rect x="1038.500" y="425" width="13" height="9" rx="2" fill="#444"/>
<rect x="1038.500" y="462" width="13" height="9" rx="2" fill="#444"/>
<rect x="1038.500" y="499" width="13" height="9" rx="2" fill="#444"/>
<rect x="1038.500" y="535" width="13" height="9" rx="2" fill="#444"/>
</svg>
<div class="t" style="left:1037px;top:197px;font-size:10px;color:#e2e2e2;transform:scaleX(.96);transform-origin:0 0">Capture Color Theme 1</div>
<div class="t" style="left:1037px;top:234px;font-size:10px;color:#e2e2e2;transform:scaleX(.96);transform-origin:0 0">Capture Color Theme 2</div>
<div class="t" style="left:1037px;top:265px;font-size:10px;color:#e2e2e2">Vector Smart Object</div>
<div class="t" style="left:1037px;top:302px;font-size:10px;color:#e2e2e2">Vector Smart Object</div>
<div class="t" style="left:1037px;top:338px;font-size:10px;color:#e2e2e2">Vector Smart Object</div>
<div class="t" style="left:1037px;top:375px;font-size:10px;color:#e2e2e2">Vector Smart Object</div>
<div class="t" style="left:1037px;top:411px;font-size:10px;color:#e2e2e2">Vector Smart Object</div>
<div class="t" style="left:1037px;top:448px;font-size:10px;color:#e2e2e2">Vector Smart Object</div>
<div class="t" style="left:1037px;top:485px;font-size:10px;color:#e2e2e2">Vector Smart Object</div>
<div class="t" style="left:1037px;top:521px;font-size:10px;color:#e2e2e2">Vector Smart Object</div>
<div class="t" style="left:1041.500px;top:279px;font-size:7px;font-weight:bold;color:#8e8e8e">AI</div>
<div class="t" style="left:1041.500px;top:316px;font-size:7px;font-weight:bold;color:#8e8e8e">AI</div>
<div class="t" style="left:1041.500px;top:352px;font-size:7px;font-weight:bold;color:#8e8e8e">AI</div>
<div class="t" style="left:1041.500px;top:389px;font-size:7px;font-weight:bold;color:#8e8e8e">AI</div>
<div class="t" style="left:1041.500px;top:425px;font-size:7px;font-weight:bold;color:#8e8e8e">AI</div>
<div class="t" style="left:1041.500px;top:462px;font-size:7px;font-weight:bold;color:#8e8e8e">AI</div>
<div class="t" style="left:1041.500px;top:499px;font-size:7px;font-weight:bold;color:#8e8e8e">AI</div>
<div class="t" style="left:1041.500px;top:535px;font-size:7px;font-weight:bold;color:#8e8e8e">AI</div>
<!--/LIBS-->
<!--DIALOG-->
<div class="a" style="left:449px;top:391px;width:290px;height:165px;border-radius:7px;background:#4e4e4e;box-shadow:0 12px 30px 2px rgba(0,0,0,.30),0 2px 6px rgba(0,0,0,.25),0 0 0 .5px rgba(0,0,0,.3);overflow:hidden">
 <div class="a" style="left:0;top:0;width:290px;height:24px;background:#d2d2d2;border-bottom:1px solid #b4b4b4"></div>
 <div class="t" style="left:-2px;width:290px;top:5px;text-align:center;font-size:11px;font-weight:bold;color:#3a3a3a;letter-spacing:-.1px">Blend Options</div>
 <div class="t" style="left:29px;top:46px;font-size:10.500px;color:#dcdcdc">Spacing:</div>
 <div class="a" style="left:74px;top:42px;width:117px;height:18px;background:#454545;border-radius:2px"></div>
 <div class="t" style="left:78px;top:46px;font-size:10.500px;font-weight:bold;color:#f4f4f4;transform:scaleX(.93);transform-origin:0 0">Specified Steps</div>
 <div class="a" style="left:201px;top:42px;width:75px;height:18px;background:#424242;border-radius:2px"></div>
 <div class="t" style="left:206px;top:46px;font-size:10.500px;font-weight:bold;color:#f4f4f4">7</div>
 <div class="t" style="left:12px;top:82px;font-size:10.500px;color:#dcdcdc">Orientation:</div>
 <div class="a" style="left:74px;top:79px;width:33px;height:19px;background:#2e2e2e;border-radius:1px"></div>
 <div class="a" style="left:108px;top:79px;width:35px;height:19px;background:#525252;border:1px solid #474747;border-radius:1px"></div>
 <div class="a" style="left:13px;top:123px;width:9px;height:9px;background:#3f8fe0;border-radius:2px"></div>
 <div class="t" style="left:27px;top:122px;font-size:10.500px;font-weight:bold;color:#f0f0f0;transform:scaleX(.92);transform-origin:0 0">Preview</div>
 <div class="a" style="left:119.500px;top:118px;width:76.500px;height:21.500px;border:1.500px solid #e4e4e4;border-radius:11px"></div>
 <div class="a" style="left:200.500px;top:118px;width:76.500px;height:21.500px;border:2px solid #fcfcfc;border-radius:11px"></div>
 <div class="t" style="left:119px;width:78px;top:123px;text-align:center;font-size:11px;font-weight:bold;color:#f4f4f4;transform:scaleX(.93)">Cancel</div>
 <div class="t" style="left:200px;width:78px;top:123px;text-align:center;font-size:11px;font-weight:bold;color:#f4f4f4">OK</div>
 <svg class="a" style="left:0;top:0" width="290" height="164" viewBox="0 0 290 164" fill="none">
  <path d="M183.500 50l2.500 2.500 2.500-2.500" stroke="#e8e8e8" stroke-width="1.300"/>
  <!-- orientation icon 1 -->
  <path d="M79 91.500C82 88.500 86 88 90 88S98 88.500 101 91.500" stroke="#f4f4f4" stroke-width="1.200"/>
  <path d="M79.300 88.500v5.500M84.200 84.500v7M90 84v7.500M95.800 84.500v7M100.800 88.500v5.500" stroke="#fafafa" stroke-width="1.800"/>
  <!-- orientation icon 2 -->
  <path d="M115 91.500C118 88.500 122 88 126 88S134 88.500 137 91.500" stroke="#c8c8c8" stroke-width="1.100"/>
  <path d="M113 89.500l4.500 4.500M118.500 86.500l2 4.500M126 84.500v6.500M133.500 86.500l-2 4.500M139.500 89.500l-4.500 4.500" stroke="#d0d0d0" stroke-width="1.700"/>
  <!-- check -->
  <path d="M15 127.500l2 2.200 3.500-4.500" stroke="#fff" stroke-width="1.400"/>
 </svg>
</div>

<!--/DIALOG-->
</body></html>
